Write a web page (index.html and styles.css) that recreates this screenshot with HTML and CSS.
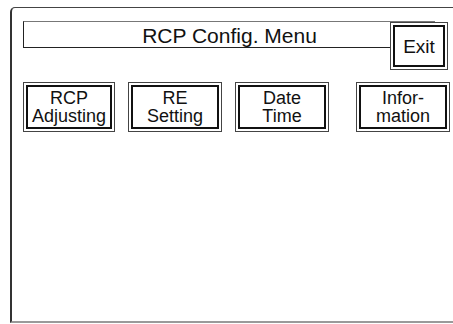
FILE: index.html
```html
<!DOCTYPE html>
<html lang="en">
<head>
    <meta charset="UTF-8">
    <meta name="viewport" content="width=device-width, initial-scale=1.0">
    <title>RCP Config. Menu</title>
    <link rel="stylesheet" href="styles.css">
</head>
<body>
    <div class="panel">
        <header class="menu-header">
            <h1 class="menu-title">RCP Config. Menu</h1>
            <button class="key key-exit"><span class="key-face">Exit</span></button>
        </header>

        <nav class="menu-keys">
            <button class="key"><span class="key-face">RCP<br>Adjusting</span></button>
            <button class="key key-wide"><span class="key-face">RE<br>Setting</span></button>
            <button class="key key-wide"><span class="key-face">Date<br>Time</span></button>
            <button class="key key-wide key-info"><span class="key-face">Infor-<br>mation</span></button>
        </nav>
    </div>
</body>
</html>
```

FILE: styles.css
```css
body {
    margin: 0;
    padding: 0;
    background-color: #fff;
    font-family: "Liberation Sans", Arial, sans-serif;
    color: #111;
    overflow: hidden;
}

/* frame runs off the right edge, so no right border */
.panel {
    box-sizing: border-box;
    width: 443px;
    height: 316px;
    margin: 7px 0 0 10px;
    padding: 13px 0 0 11px;
    border-top: 1px solid #444;
    border-left: 2px solid #333;
    border-bottom: 2px solid #9a9a9a;
    border-top-left-radius: 5px;
}

.menu-header {
    display: flex;
    align-items: flex-start;
}

.menu-title {
    box-sizing: border-box;
    width: 412px;
    height: 27px;
    margin: 0;
    padding-top: 2px;
    border-top: 1px solid #777;
    border-left: 1px solid #222;
    border-bottom: 1px solid #222;
    font-size: 21px;
    font-weight: normal;
    line-height: 23px;
    text-align: center;
}

/* double-framed touch key */
.key {
    box-sizing: border-box;
    display: block;
    width: 92px;
    height: 50px;
    margin: 0;
    padding: 2px;
    border: 1px solid #444;
    background-color: #fff;
    font-family: inherit;
    color: inherit;
    cursor: pointer;
}

.key-face {
    box-sizing: border-box;
    display: flex;
    align-items: center;
    justify-content: center;
    height: 100%;
    border: 2px solid #111;
    font-size: 18px;
    line-height: 18px;
    text-align: center;
}

.key-exit {
    width: 58px;
    height: 48px;
    margin: 1px 0 0 -45px;
}

.key-exit .key-face {
    font-size: 19px;
    padding-top: 2px;
}

.menu-keys {
    display: flex;
    gap: 13px;
    margin-top: 12px;
}

.key-wide {
    width: 94px;
}

.key-info {
    margin-left: 14px;
}
```
